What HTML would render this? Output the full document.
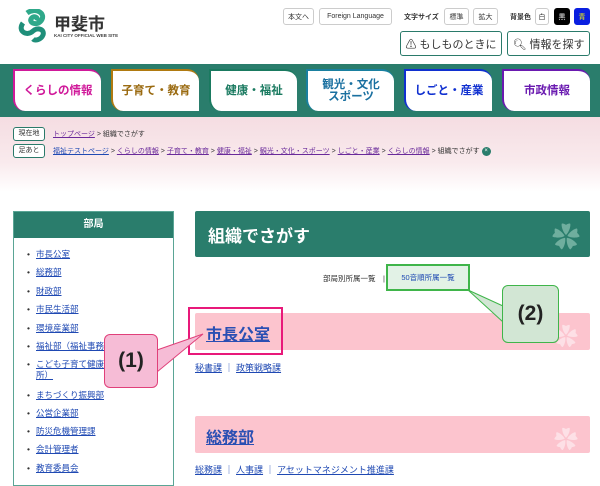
<!DOCTYPE html>
<html><head><meta charset="utf-8"><style>
*{margin:0;padding:0;box-sizing:border-box}
body{width:600px;height:474px;overflow:hidden;background:#fff;font-family:"Liberation Sans","Noto Sans CJK JP",sans-serif;position:relative;color:#333}
.a{position:absolute}
.btn{position:absolute;border:1px solid #ccc;border-radius:3px;font-size:7px;display:flex;align-items:center;justify-content:center;background:#fff;color:#333}
.btn2{position:absolute;border:1px solid #2a7a6a;border-radius:3px;font-size:11px;display:flex;align-items:center;justify-content:center;background:#fff;color:#333}
.nav{position:absolute;left:0;top:64px;width:600px;height:53px;background:#2a7d6c}
.tab{position:absolute;top:5px;height:42px;width:88px;background:#fff;border-radius:0 12px 0 12px;border-left:2px solid;border-top:2px solid;display:flex;align-items:center;justify-content:center;font-weight:bold;font-size:11.5px;text-align:center;line-height:12px}
.bc{position:absolute;font-size:7px;color:#333}
.bc a{color:#6a2a9a;text-decoration:underline}
.lab{display:inline-block;border:1px solid #2a7a6a;border-radius:3px;background:#fff;width:32px;height:14px;text-align:center;line-height:12px;font-size:7px;margin-right:8px;vertical-align:middle}
.side{position:absolute;left:13px;top:211px;width:161px;height:275px;border:1px solid #5aa595}
.sh{height:26px;background:#2a7d6c;color:#fff;font-weight:bold;font-size:10px;text-align:center;line-height:26px}
.side li{position:absolute;left:22px;font-size:8.5px;color:#1f49b3;text-decoration:underline;list-style:none;white-space:nowrap;line-height:11px}
.side li:before{content:"•";position:absolute;left:-9px;color:#333;text-decoration:none}
.pk{position:absolute;left:195px;width:395px;background:#fcc4ce;border-radius:2px}
.pk span{position:absolute;left:11px;color:#2a4fb3;font-weight:bold;text-decoration:underline;font-size:16px}
.lnk{position:absolute;left:195px;font-size:9px;color:#1f49b3}
.lnk u{color:#1f49b3}
</style></head><body>
<svg class="a" style="left:17px;top:9px" width="36" height="34" viewBox="0 0 36 34">
<path d="M10 4 C18 -2 30 4 24 12 C20 17 12 14 14 10 C16 6 22 8 20 12" fill="none" stroke="#2fa88a" stroke-width="5"/>
<path d="M6 14 C0 22 10 28 16 22 C20 18 28 20 26 26 C24 31 18 32 16 30" fill="none" stroke="#1f8f7a" stroke-width="5"/>
</svg>
<div class="a" style="left:54px;top:10px;font-size:17px;font-weight:bold;color:#333">甲斐市</div>
<div class="a" style="left:54px;top:33px;font-size:4.5px;color:#444;font-weight:bold">KAI CITY OFFICIAL WEB SITE</div>
<div class="btn" style="left:283px;top:8px;width:31px;height:17px">本文へ</div>
<div class="btn" style="left:319px;top:8px;width:73px;height:17px">Foreign Language</div>
<div class="a" style="left:404px;top:12px;font-size:7px;font-weight:bold">文字サイズ</div>
<div class="btn" style="left:444px;top:8px;width:25px;height:17px">標準</div>
<div class="btn" style="left:473px;top:8px;width:25px;height:17px">拡大</div>
<div class="a" style="left:510px;top:12px;font-size:7px;font-weight:bold">背景色</div>
<div class="btn" style="left:535px;top:8px;width:14px;height:17px">白</div>
<div class="btn" style="left:554px;top:8px;width:16px;height:17px;background:#000;color:#fff;border-color:#000">黒</div>
<div class="btn" style="left:574px;top:8px;width:16px;height:17px;background:#0a1fe0;color:#ff0;border-color:#0a1fe0">青</div>
<div class="btn2" style="left:400px;top:31px;width:102px;height:25px">⚠ もしものときに</div>
<div class="btn2" style="left:507px;top:31px;width:83px;height:25px">🔍︎ 情報を探す</div>
<div class="nav">
<div class="tab" style="left:13px;border-color:#d0199a;color:#d0199a">くらしの情報</div>
<div class="tab" style="left:111px;border-color:#b07a10;color:#9a6a10">子育て・教育</div>
<div class="tab" style="left:209px;border-color:#1a7a60;color:#1a7a60">健康・福祉</div>
<div class="tab" style="left:306px;border-color:#1a80a0;color:#1a70a0">観光・文化<br>スポーツ</div>
<div class="tab" style="left:404px;border-color:#1030d0;color:#1030d0">しごと・産業</div>
<div class="tab" style="left:502px;border-color:#6a1ab0;color:#6a1ab0">市政情報</div>
</div>
<div class="a" style="left:0;top:117px;width:600px;height:75px;background:linear-gradient(#f5dde2,#f9eaed 60%,#fff)"></div>
<div class="bc" style="left:13px;top:127px"><span class="lab">現在地</span><a>トップページ</a> &gt; 組織でさがす</div>
<div class="bc" style="left:13px;top:144px"><span class="lab">足あと</span><a style="color:#1f49b3">福祉テストページ</a> &gt; <a>くらしの情報</a> &gt; <a>子育て・教育</a> &gt; <a>健康・福祉</a> &gt; <a>観光・文化・スポーツ</a> &gt; <a>しごと・産業</a> &gt; <a>くらしの情報</a> &gt; 組織でさがす <span style="display:inline-block;width:9px;height:9px;border-radius:50%;background:#2a7d6c;color:#fff;font-size:6px;text-align:center;line-height:9px;vertical-align:middle">×</span></div>
<div class="side"><div class="sh">部局</div>
<ul>
<li style="top:37px">市長公室</li><li style="top:55px">総務部</li><li style="top:74px">財政部</li><li style="top:92px">市民生活部</li><li style="top:111px">環境産業部</li><li style="top:129px">福祉部（福祉事務所）</li><li style="top:147px">こども子育て健康部<br>所）</li><li style="top:178px">まちづくり振興部</li><li style="top:196px">公営企業部</li><li style="top:214px">防災危機管理課</li><li style="top:232px">会計管理者</li><li style="top:251px">教育委員会</li>
</ul></div>
<div class="a" style="left:195px;top:211px;width:395px;height:46px;background:#2a7d6c;border-radius:2px"><span class="a" style="left:13px;top:11px;color:#fff;font-weight:bold;font-size:17px">組織でさがす</span><span class="a" style="right:10px;top:5px;color:#6fae9e;font-size:28px">✿</span></div>
<div class="a" style="left:323px;top:273px;font-size:7.5px">部局別所属一覧　|</div>
<div class="a" style="left:386px;top:264px;width:84px;height:27px;border:2px solid #3fb54a;background:#e2f2e6;font-size:7.5px;color:#1f49b3;display:flex;align-items:center;justify-content:center">50音順所属一覧</div>
<div class="pk" style="top:313px;height:37px"><span style="top:8px">市長公室</span><span style="left:auto;right:12px;top:4px;color:#fde0e6;text-decoration:none;font-size:24px;font-weight:normal">✿</span></div>
<div class="a" style="left:188px;top:307px;width:95px;height:48px;border:2px solid #e8197a"></div>
<svg class="a" style="left:0;top:0" width="600" height="474">
<polygon points="157,350 203,334 157,372" fill="#f6bcd6" stroke="#e0407a" stroke-width="1"/>
<polygon points="503,306 468,290 503,322" fill="#d2e6d4" stroke="#3fb54a" stroke-width="1"/>
</svg>
<div class="a" style="left:104px;top:334px;width:54px;height:54px;background:#f6bcd6;border:1.5px solid #e0407a;border-radius:6px;font-size:21px;font-weight:bold;display:flex;align-items:center;justify-content:center;color:#222">(1)</div>
<div class="a" style="left:502px;top:285px;width:57px;height:58px;background:#d2e6d4;border:1.5px solid #3fb54a;border-radius:6px;font-size:21px;font-weight:bold;display:flex;align-items:center;justify-content:center;color:#222">(2)</div>
<div class="lnk" style="top:361px"><u>秘書課</u> ｜ <u>政策戦略課</u></div>
<div class="pk" style="top:416px;height:37px"><span style="top:8px">総務部</span><span style="left:auto;right:12px;top:4px;color:#fde0e6;text-decoration:none;font-size:24px;font-weight:normal">✿</span></div>
<div class="lnk" style="top:463px"><u>総務課</u> ｜ <u>人事課</u> ｜ <u>アセットマネジメント推進課</u></div>
</body></html>
